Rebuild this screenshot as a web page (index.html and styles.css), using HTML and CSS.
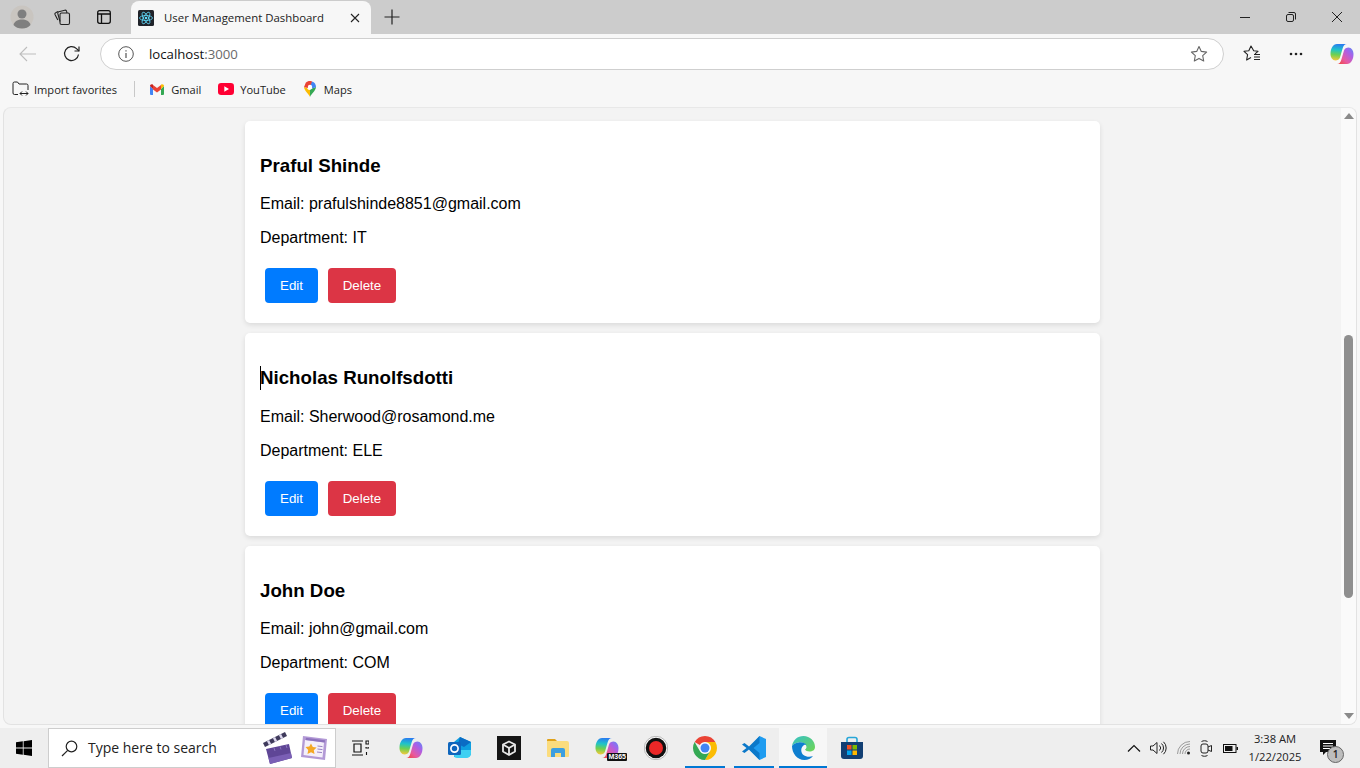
FILE: index.html
```html
<!doctype html>
<html>
    <head>
        <meta charset="utf-8" />
        <meta name="viewport" content="width=device-width, initial-scale=1" />
        <title>User Management Dashboard</title>
        <link rel="stylesheet" href="styles.css">
    </head>
    <body>
        <svg class="defs" width="0" height="0">
            <defs>
                <linearGradient id="cpA" x1="0.4" y1="0" x2="0.3" y2="1">
                    <stop offset="0" stop-color="#2a7cf0" />
                    <stop offset="0.35" stop-color="#1fc4c8" />
                    <stop offset="0.65" stop-color="#6fd050" />
                    <stop offset="1" stop-color="#f7c83c" />
                </linearGradient>
                <linearGradient id="cpB" x1="0" y1="1" x2="1" y2="0">
                    <stop offset="0" stop-color="#f0442f" />
                    <stop offset="0.35" stop-color="#e85aa0" />
                    <stop offset="0.7" stop-color="#a860e8" />
                    <stop offset="1" stop-color="#5a8cf5" />
                </linearGradient>
                <linearGradient id="edgeA" x1="0" y1="0" x2="1" y2="1">
                    <stop offset="0" stop-color="#35c1c9" />
                    <stop offset="1" stop-color="#6fd651" />
                </linearGradient>
                <symbol id="copilot" viewBox="0 0 24 24">
                    <path d="M7 2h10c-2.500 0-3.700 2-4.400 4.500L10 15.500c-.5 2-2.500 3-4.500 3-3 0-5-3-5-6.500C.5 6.500 3 2 7 2z" fill="url(#cpA)" />
                    <path d="M17 22H7c2.500 0 3.700-2 4.400-4.500L14 8.500c.5-2 2.500-3 4.500-3 3 0 5 3 5 6.500 0 5.500-2.500 10-6.500 10z" fill="url(#cpB)" />
                </symbol>
            </defs>
        </svg>

        <div class="tabstrip">
            <span class="strip-btn avatar-btn">
                <svg width="24" height="24" viewBox="0 0 24 24"><circle cx="12" cy="12" r="11.500" fill="#c9c5c0" /><circle cx="12" cy="9" r="4.500" fill="#7f7f7f" /><path d="M3.500 20c1-4 4.500-5.500 8.500-5.500s7.500 1.500 8.500 5.500c-2 2.500-5 3.500-8.500 3.500s-6.500-1-8.500-3.500z" fill="#7f7f7f" /></svg>
            </span>
            <span class="strip-btn workspaces-btn">
                <svg width="18" height="18" viewBox="0 0 18 18" fill="none" stroke="#222" stroke-width="1.100"><rect x="7" y="5" width="9.500" height="11.500" rx="1.500" /><path d="M7 13.500 4.800 5.500c-.2-.8.2-1.500 1-1.700l6-1.600c.8-.2 1.500.2 1.700 1L14 5" /><path d="M4.800 12 2 6.500c-.3-.7 0-1.500.7-1.800L5 3.500" /></svg>
            </span>
            <span class="strip-btn vtabs-btn">
                <svg width="16" height="16" viewBox="0 0 16 16" fill="none" stroke="#111" stroke-width="1.300"><rect x="1.700" y="1.700" width="12.600" height="12.600" rx="2" /><path d="M1.700 5h12.600M5.500 5v9.300" /></svg>
            </span>
            <div class="tab">
                <svg class="favicon" width="16" height="16" viewBox="0 0 16 16"><rect width="16" height="16" rx="1.500" fill="#20232a" /><g fill="none" stroke="#61dafb" stroke-width=".8"><ellipse cx="8" cy="8" rx="6.500" ry="2.500" /><ellipse cx="8" cy="8" rx="6.500" ry="2.500" transform="rotate(60 8 8)" /><ellipse cx="8" cy="8" rx="6.500" ry="2.500" transform="rotate(120 8 8)" /></g><circle cx="8" cy="8" r="1.300" fill="#61dafb" /></svg>
                <span class="tab-title">User Management Dashboard</span>
                <svg class="tab-close" width="10" height="10" viewBox="0 0 10 10" stroke="#222" stroke-width="1.100"><path d="M1 1l8 8M9 1l-8 8" /></svg>
            </div>
            <span class="strip-btn newtab-btn">
                <svg width="16" height="16" viewBox="0 0 16 16" stroke="#222" stroke-width="1.200"><path d="M8 .5v15M.5 8h15" /></svg>
            </span>
            <div class="window-btns">
                <span class="win-btn"><svg width="10" height="10" viewBox="0 0 10 10" stroke="#222"><path d="M0 5.500h10" /></svg></span>
                <span class="win-btn"><svg width="10" height="10" viewBox="0 0 10 10" fill="none" stroke="#222"><rect x=".5" y="2.500" width="7" height="7" rx="1.500" /><path d="M2.500 .5h5.500a1.500 1.500 0 0 1 1.500 1.500v5.500" /></svg></span>
                <span class="win-btn"><svg width="10" height="10" viewBox="0 0 10 10" stroke="#222"><path d="M0 0l10 10M10 0L0 10" /></svg></span>
            </div>
        </div>

        <div class="toolbar">
            <span class="tool-btn back-btn">
                <svg width="18" height="18" viewBox="0 0 18 18" fill="none" stroke="#bdbdbd" stroke-width="1.100"><path d="M1 9h16M8 2 1 9l7 7" /></svg>
            </span>
            <span class="tool-btn reload-btn">
                <svg width="18" height="18" viewBox="0 0 18 18" fill="none" stroke="#222" stroke-width="1.200"><path d="M15.500 9.500A7 7 0 1 1 13.500 3.600L16 6" /><path d="M16 1.500V6h-4.500" /></svg>
            </span>
            <div class="urlbar">
                <svg class="info-icon" width="16" height="16" viewBox="0 0 16 16" fill="none" stroke="#555"><circle cx="8" cy="8" r="7.300" /><path d="M8 7v5M8 4.200v1.300" stroke-width="1.200" /></svg>
                <span class="url"><span class="host">localhost</span>:3000</span>
                <svg class="url-star" width="18" height="18" viewBox="0 0 18 18" fill="none" stroke="#666" stroke-width="1.100"><path d="M9 1.500l2.300 4.900 5.300.7-3.900 3.600 1 5.300L9 13.400 4.300 16l1-5.300-3.900-3.600 5.300-.7z" stroke-linejoin="round" /></svg>
            </div>
            <span class="tool-btn fav-btn">
                <svg width="18" height="18" viewBox="0 0 18 18" fill="none" stroke="#222" stroke-width="1.100"><path d="M12 8.800l3-2.500-4.300-.6L8 1 5.800 5.700 1 6.300l3.600 3.400-1 5.300L8 12.500" stroke-linejoin="round" /><path d="M11 9.500h6M11 12h6M11 14.500h6" /></svg>
            </span>
            <span class="tool-btn more-btn">
                <svg width="14" height="4" viewBox="0 0 14 4" fill="#222"><circle cx="2" cy="2" r="1.300" /><circle cx="7" cy="2" r="1.300" /><circle cx="12" cy="2" r="1.300" /></svg>
            </span>
            <span class="tool-btn copilot-btn">
                <svg width="24" height="24"><use href="#copilot" /></svg>
            </span>
        </div>

        <div class="bookmarks">
            <span class="bookmark import-mark">
                <svg width="17" height="16" viewBox="0 0 17 16" fill="none" stroke="#222"><path d="M6 13.500H2.500a1.500 1.500 0 0 1-1.500-1.500V2.500A1.500 1.500 0 0 1 2.500 1h3l1.500 2h7.500A1.500 1.500 0 0 1 16 4.500V9" /><path d="M8 12.500h8M10 10.500l-2 2 2 2M14 10.500l2 2-2 2" /></svg>
                Import favorites
            </span>
            <span class="bookmark-sep"></span>
            <span class="bookmark gmail-mark">
                <svg width="14" height="11" viewBox="0 0 14 11"><path d="M0 2v8a1 1 0 0 0 1 1h2V5z" fill="#4285f4" /><path d="M14 2v8a1 1 0 0 1-1 1h-2V5z" fill="#34a853" /><path d="M3 5.500V1L7 4l4-3v4.500L7 8.500z" fill="#ea4335" /><path d="M0 2c0-1.500 1.700-2.300 3-1.300V5z" fill="#c5221f" /><path d="M14 2c0-1.500-1.700-2.300-3-1.300V5z" fill="#fbbc04" /></svg>
                Gmail
            </span>
            <span class="bookmark yt-mark">
                <svg width="16" height="12" viewBox="0 0 16 12"><rect width="16" height="12" rx="3.200" fill="#ff0033" /><path d="M6.300 3.300v5.400L11 6z" fill="#fff" /></svg>
                YouTube
            </span>
            <span class="bookmark maps-mark">
                <svg width="12" height="16" viewBox="0 0 12 16"><path d="M6 16C5 13 0 9.500 0 6l3 1c.6 1.700 2 2 3 2z" fill="#fbbc04" /><path d="M6 16c1-3 6-6.500 6-10L9 7 6 9z" fill="#34a853" /><path d="M1.800 1.800 0 6l3.500 1L8 3V.4C5.500-.4 3.300.2 1.800 1.800z" fill="#ea4335" /><path d="M8 .4A6 6 0 0 1 12 6L8.500 7.500 6.500 4.500z" fill="#4285f4" /><circle cx="6" cy="6" r="2.200" fill="#fff" /></svg>
                Maps
            </span>
        </div>

        <div class="viewport">
            <main class="page">
                <section class="user-card">
                    <h3>Praful Shinde</h3>
                    <p>Email: prafulshinde8851@gmail.com</p>
                    <p>Department: IT</p>
                    <div class="card-actions">
                        <button class="btn btn-edit">Edit</button>
                        <button class="btn btn-delete">Delete</button>
                    </div>
                </section>
                <section class="user-card">
                    <h3 class="has-caret">Nicholas Runolfsdotti</h3>
                    <p>Email: Sherwood@rosamond.me</p>
                    <p>Department: ELE</p>
                    <div class="card-actions">
                        <button class="btn btn-edit">Edit</button>
                        <button class="btn btn-delete">Delete</button>
                    </div>
                </section>
                <section class="user-card">
                    <h3>John Doe</h3>
                    <p>Email: john@gmail.com</p>
                    <p>Department: COM</p>
                    <div class="card-actions">
                        <button class="btn btn-edit">Edit</button>
                        <button class="btn btn-delete">Delete</button>
                    </div>
                </section>
            </main>
            <div class="scrollbar">
                <span class="arrow arrow-up"></span>
                <span class="thumb"></span>
                <span class="arrow arrow-down"></span>
            </div>
        </div>

        <div class="taskbar">
            <span class="start-btn">
                <svg width="16" height="16" viewBox="0 0 16 16" fill="#000"><path d="M0 2.300 6.800 1.300v6.300H0zM7.600 1.200 16 0v7.600H7.600zM0 8.400h6.800v6.300L0 13.700zM7.600 8.400H16V16l-8.400-1.200z" /></svg>
            </span>
            <div class="searchbox">
                <svg class="search-icon" width="17" height="17" viewBox="0 0 17 17" fill="none" stroke="#222" stroke-width="1.200"><circle cx="10.500" cy="6.500" r="5.300" /><path d="M6.700 10.300 1 16" /></svg>
                <span class="search-text">Type here to search</span>
                <svg class="clapper" width="32" height="34" viewBox="0 0 32 34"><path d="M4 18l23-5 3 14-22 6z" fill="#5f4696" /><path d="M6.500 27 29 22l1 5-22 6z" fill="#7a5fb5" /><path d="M1 12 23 1l2 4L3 16z" fill="#3f3a5c" /><path d="M6 9.500l2 4M12 6.500l2 4M18 3.500l2 4" stroke="#dcd8ee" stroke-width="2.500" /><path d="M12 17l1 3M18 15.500l1 3M24 14l1 3" stroke="#8a74bd" /></svg>
                <svg class="news" width="28" height="26" viewBox="0 0 28 26"><path d="M3 1l24 3-2 21-24-3z" fill="#b39ad6" /><path d="M5 5l19 2.500-1.500 15L3.500 20z" fill="#f4effa" /><path d="M6 2.700l19 2.500-.2 2.300L5.700 5z" fill="#8e73bd" /><path d="M11 8.500l1.800 3.500 3.800.5-2.800 2.700.7 3.800-3.500-1.800-3.500 1.700.7-3.800L5.500 12l3.800-.5z" fill="#f4a825" /><path d="M17.500 11l5 .6M17.500 14l5 .6M17 17l5 .6" stroke="#9a83c4" /></svg>
            </div>
            <span class="task-cell taskview-cell">
                <svg width="17" height="16" viewBox="0 0 17 16" fill="none" stroke="#111" stroke-width="1.200"><path d="M0 1h11M0 15h11M2 4h7v8H2z" /><path d="M14 1h3v3h-3zM14 7v1h3V7M14.500 12v3" stroke-width="1.100" /></svg>
            </span>
            <div class="task-apps">
                <span class="task-cell"><svg width="24" height="24"><use href="#copilot" /></svg></span>
                <span class="task-cell">
                    <svg width="24" height="24" viewBox="0 0 24 24"><path d="M12 1l11 5v11c0 2-1 4-4 4H10l-4 0 0-15z" fill="#0f9fe0" /><path d="M6 14h17v3c0 3-2 5-5 5H9c-2 0-3-1-3-3z" fill="#3ed0f2" /><path d="M12 1l11 5-7 5-6-3z" fill="#0a6cc4" /><rect x="0" y="6" width="13" height="13" rx="1.500" fill="#0f66bd" /><circle cx="6.500" cy="12.500" r="3.600" fill="none" stroke="#fff" stroke-width="1.700" /></svg>
                </span>
                <span class="task-cell">
                    <svg width="24" height="24" viewBox="0 0 24 24"><rect width="24" height="24" fill="#151515" /><g fill="none" stroke="#e8e8e8" stroke-width="1.800" stroke-linejoin="round"><path d="M12 5.500l6 3v7l-6 3.500-6-3.500v-7z" /><path d="M6 8.500l6 3.500 6-3.500M12 12v7" /></g></svg>
                </span>
                <span class="task-cell">
                    <svg width="22" height="20" viewBox="0 0 22 20"><path d="M0 2a1 1 0 0 1 1-1h7l2 2h-10z" fill="#e0a21a" /><path d="M0 3h20a2 2 0 0 1 2 2v13a1 1 0 0 1-1 1H1a1 1 0 0 1-1-1z" fill="#fbdc7d" /><path d="M4 12a2 2 0 0 1 2-2h10a2 2 0 0 1 2 2v7h-4v-4H8v4H4z" fill="#3d9fe0" /></svg>
                </span>
                <span class="task-cell m365-cell">
                    <svg width="24" height="24"><use href="#copilot" /></svg>
                    <span class="m365-tag">M365</span>
                </span>
                <span class="task-cell">
                    <svg width="24" height="24" viewBox="0 0 24 24"><circle cx="12" cy="12" r="11.700" fill="#fff" stroke="#888" stroke-width=".6" /><circle cx="12" cy="12" r="10.300" fill="#111" /><circle cx="12" cy="12" r="7" fill="#ec2727" /></svg>
                </span>
                <span class="task-cell running">
                    <svg width="24" height="24" viewBox="0 0 24 24"><path d="M12 0a12 12 0 0 1 10.390 6H12a6 6 0 0 0-5.200 3L1.610 6A12 12 0 0 1 12 0z" fill="#ea4335" /><path d="M22.390 6A12 12 0 0 1 12 24l5.200-9a6 6 0 0 0 0-6 6 6 0 0 0-5.200-3z" fill="#fbbc04" /><path d="M1.610 6l5.190 9a6 6 0 0 0 5.200 3 6 6 0 0 0 5.200-3L12 24A12 12 0 0 1 1.610 6z" fill="#34a853" /><circle cx="12" cy="12" r="5.500" fill="#fff" /><circle cx="12" cy="12" r="4.500" fill="#4285f4" /></svg>
                </span>
                <span class="task-cell running">
                    <svg width="24" height="24" viewBox="0 0 24 24"><path d="M17.500 0 24 3v18l-6.500 3L7 13.500z" fill="#1f9cf0" /><path d="M17.500 0 7 10.500 2.500 7 0 8.500 4.500 12 0 15.500 2.500 17 7 13.500 17.500 24V17L11.500 12l6-5z" fill="#0b78c9" /></svg>
                </span>
                <span class="task-cell running active">
                    <svg width="24" height="24" viewBox="0 0 24 24"><path d="M1 10C2 4 6.500 0 12.500 0 19 0 24 5 24 11c0 3-2.500 4.500-5.500 4.500-2 0-4-.7-4.500-2 1.500-1 2-2.500.8-4.500C13.500 7 10.500 6 7.500 6.500 4.500 7 2 8 1 10z" fill="url(#edgeA)" /><path d="M1 10c0 7 5 14 12.500 14 3.500 0 6.500-1.300 8.500-4-3 1.300-7 1-9.500-1-2.500-2-3-6-1-8.500 1-1.500 2.500-2 4-1.500C14 7 11 6 7.500 6.500 4.500 7 2 8 1 10z" fill="#0f7fd0" /></svg>
                </span>
                <span class="task-cell">
                    <svg width="24" height="24" viewBox="0 0 24 24"><path d="M7 6V3.500A2 2 0 0 1 9 1.500h6a2 2 0 0 1 2 2V6" fill="none" stroke="#27a6d8" stroke-width="1.600" /><path d="M1 6h22v14a3 3 0 0 1-3 3H4a3 3 0 0 1-3-3z" fill="#123f73" /><rect x="7" y="9" width="4.500" height="4.500" fill="#f25022" /><rect x="12.500" y="9" width="4.500" height="4.500" fill="#7fba00" /><rect x="7" y="14.500" width="4.500" height="4.500" fill="#00a4ef" /><rect x="12.500" y="14.500" width="4.500" height="4.500" fill="#ffb900" /></svg>
                </span>
            </div>
            <div class="tray">
                <svg class="tray-chevron" width="14" height="8" viewBox="0 0 14 8" fill="none" stroke="#111" stroke-width="1.200"><path d="M1 7.500 7 1.500l6 6" /></svg>
                <svg class="tray-volume" width="17" height="14" viewBox="0 0 17 14" fill="none" stroke="#222"><path d="M.5 5v4h2.500L7 12.500v-11L3 5z" /><path d="M9.500 4.500a3.500 3.500 0 0 1 0 5M11.500 2.500a6 6 0 0 1 0 9M13.500 .8a8.500 8.500 0 0 1 0 12.400" /></svg>
                <svg class="tray-wifi" width="14" height="14" viewBox="0 0 14 14" fill="none" stroke="#9a9a9a"><path d="M.5 13A12.500 12.500 0 0 1 13 .5M3 13A10 10 0 0 1 13 3M5.500 13A7.500 7.500 0 0 1 13 5.500M8 13a5 5 0 0 1 5-5" /><circle cx="11.500" cy="12" r="1.500" fill="#222" stroke="none" /></svg>
                <svg class="tray-mic" width="12" height="17" viewBox="0 0 12 17" fill="none" stroke="#222"><rect x="1" y="4" width="7" height="9" rx="2" /><path d="M8 7l3.500-1.500v6L8 10M1.500 1.500c2-1 4-1 6 0M1.500 15.500c2 1 4 1 6 0" /></svg>
                <svg class="tray-battery" width="15" height="9" viewBox="0 0 15 9"><rect x=".5" y=".5" width="12.500" height="8" fill="none" stroke="#111" /><rect x="2" y="2" width="7.500" height="5" fill="#111" /><rect x="13.500" y="3" width="1.500" height="3" fill="#111" /></svg>
                <div class="clock">
                    <span>3:38 AM</span>
                    <span>1/22/2025</span>
                </div>
                <span class="notify">
                    <svg width="16" height="16" viewBox="0 0 16 16"><path d="M0 0h16v12H6l-3 3v-3H0z" fill="#111" /><path d="M3 3.500h10M3 6h10M3 8.500h7" stroke="#fff" /></svg>
                    <span class="notify-badge">1</span>
                </span>
            </div>
        </div>
    </body>
</html>
```

FILE: styles.css
```css
html,
body {
    height: 100%;
}

body {
    margin: 0;
    height: 768px;
    overflow: hidden;
    display: flex;
    flex-direction: column;
    background: #f7f7f7;
    font-family: "Open Sans", sans-serif;
    color: #222;
}

.defs {
    position: absolute;
}

svg {
    display: block;
    flex: none;
}

/* browser chrome */
.tabstrip {
    height: 34px;
    flex: none;
    display: flex;
    align-items: center;
    background: #cccccc;
}

.strip-btn {
    display: flex;
    align-items: center;
    justify-content: center;
}

.avatar-btn {
    width: 24px;
    margin-left: 10px;
}

.workspaces-btn {
    width: 18px;
    margin-left: 19px;
}

.vtabs-btn {
    width: 16px;
    margin-left: 25px;
}

.tab {
    width: 240px;
    height: 33px;
    margin-top: 1px;
    margin-left: 19px;
    padding-left: 7px;
    display: flex;
    align-items: center;
    background: #f7f7f7;
    border-radius: 8px 8px 0 0;
    box-sizing: border-box;
}

.tab-title {
    margin-left: 10px;
    width: 186px;
    font-size: 11.400px;
    white-space: nowrap;
}

.newtab-btn {
    width: 16px;
    margin-left: 13px;
}

.window-btns {
    display: flex;
    margin-left: auto;
}

.win-btn {
    width: 46px;
    height: 34px;
    display: flex;
    align-items: center;
    justify-content: center;
}

.toolbar {
    height: 40px;
    flex: none;
    display: flex;
    align-items: center;
    background: #f7f7f7;
}

.tool-btn {
    display: flex;
    align-items: center;
    justify-content: center;
}

.back-btn {
    width: 18px;
    margin-left: 19px;
}

.reload-btn {
    width: 18px;
    margin-left: 26px;
}

.urlbar {
    width: 1124px;
    height: 32px;
    margin-left: 19px;
    padding: 0 15px 0 17px;
    display: flex;
    align-items: center;
    background: #fff;
    border: 1px solid #cfcfcf;
    border-radius: 16px;
    box-sizing: border-box;
}

.url {
    margin-left: 15px;
    font-size: 13.200px;
    color: #6a6a6a;
}

.host {
    color: #111;
}

.url-star {
    margin-left: auto;
}

.fav-btn {
    width: 18px;
    margin-left: 19px;
}

.more-btn {
    width: 14px;
    margin-left: 28px;
}

.copilot-btn {
    width: 24px;
    margin-left: 27px;
}

.bookmarks {
    height: 32px;
    flex: none;
    display: flex;
    align-items: center;
    padding-left: 12px;
    padding-bottom: 2px;
    box-sizing: border-box;
    font-size: 11.100px;
    background: #f7f7f7;
}

.bookmark {
    display: flex;
    align-items: center;
    gap: 6px;
    white-space: nowrap;
}

.import-mark {
    gap: 5px;
}

.bookmark-sep {
    width: 1px;
    height: 16px;
    margin: 0 15px 0 17px;
    background: #c8c8c8;
}

.gmail-mark {
    gap: 7px;
}

.yt-mark {
    margin-left: 17px;
}

.maps-mark {
    margin-left: 18px;
    gap: 8px;
}

/* page area */
.viewport {
    flex: none;
    height: 618px;
    margin: 1px 3px 0 3px;
    display: flex;
    overflow: hidden;
    background: #f3f3f3;
    border: 1px solid #e2e2e2;
    border-top-color: #e8e8e8;
    border-radius: 8px;
    box-sizing: border-box;
    font-family: "Liberation Sans", Arial, sans-serif;
    color: #000;
}

.page {
    flex: 1;
    min-width: 0;
    padding-top: 13px;
}

.user-card {
    width: 855px;
    height: 202.400px;
    margin: 0 auto 10px;
    padding: 15px;
    box-sizing: border-box;
    background: #fff;
    border-radius: 5px;
    box-shadow: 0 2px 5px rgba(0, 0, 0, 0.1);
}

.user-card h3 {
    margin: 18.720px 0;
    font-size: 18.720px;
    position: relative;
}

.user-card p {
    margin: 16px 0;
    font-size: 16px;
}

.has-caret::before {
    content: "";
    position: absolute;
    left: 0;
    top: -1px;
    bottom: -1px;
    width: 1px;
    background: #000;
}

.card-actions {
    display: flex;
}

.btn {
    margin: 5px;
    padding: 10px 15px;
    border: none;
    border-radius: 4px;
    color: #fff;
    font-family: "Liberation Sans", Arial, sans-serif;
    font-size: 13.333px;
}

.btn-edit {
    background: #007bff;
}

.btn-delete {
    width: 68px;
    padding: 10px 0;
    background: #dc3545;
}

.scrollbar {
    width: 15px;
    flex: none;
    display: flex;
    flex-direction: column;
    align-items: center;
    background: #fafafa;
}

.arrow {
    width: 0;
    height: 0;
    border-left: 5px solid transparent;
    border-right: 5px solid transparent;
}

.arrow-up {
    margin-top: 5px;
    border-bottom: 6px solid #8a8a8a;
}

.thumb {
    width: 9px;
    height: 263px;
    margin-top: 216px;
    background: #8f8f8f;
    border-radius: 5px;
}

.arrow-down {
    margin-top: auto;
    margin-bottom: 5px;
    border-top: 6px solid #8a8a8a;
}

/* windows taskbar */
.taskbar {
    height: 40px;
    margin-top: 3px;
    flex: none;
    display: flex;
    background: #eeeeee;
}

.start-btn {
    width: 48px;
    display: flex;
    align-items: center;
    justify-content: center;
}

.searchbox {
    width: 288px;
    display: flex;
    align-items: center;
    padding-left: 12px;
    background: #fff;
    border: 1px solid #cdcdcd;
    box-sizing: border-box;
}

.search-text {
    margin-left: 10px;
    margin-bottom: 1px;
    width: 174px;
    font-size: 14px;
    white-space: nowrap;
}

.news {
    margin-left: 6px;
}

.task-cell {
    position: relative;
    width: 48px;
    height: 40px;
    display: flex;
    align-items: center;
    justify-content: center;
    flex: none;
}

.task-apps {
    display: flex;
    gap: 1px;
    margin-left: 3px;
}

.running::after {
    content: "";
    position: absolute;
    left: 4px;
    right: 4px;
    bottom: 0;
    height: 2px;
    background: #0078d4;
}

.active {
    background: #f7f7f7;
}

.active::after {
    left: 0;
    right: 0;
}

.m365-tag {
    position: absolute;
    right: 4px;
    bottom: 7px;
    padding: 0 1px;
    background: #111;
    color: #fff;
    font-family: "Liberation Sans", sans-serif;
    font-size: 7px;
    font-weight: bold;
    line-height: 8px;
    border-radius: 1px;
}

.tray {
    margin-left: auto;
    display: flex;
    align-items: center;
    padding-right: 24px;
}

.tray-volume {
    margin-left: 8.500px;
}

.tray-wifi {
    margin-left: 10.500px;
}

.tray-mic {
    margin-left: 9px;
}

.tray-battery {
    margin-left: 11px;
}

.clock {
    width: 74px;
    display: flex;
    flex-direction: column;
    align-items: center;
    font-size: 11.200px;
    line-height: 18px;
}

.notify {
    position: relative;
    margin-left: 8px;
}

.notify-badge {
    position: absolute;
    left: 7px;
    top: 6px;
    width: 15px;
    height: 15px;
    background: #bdbdbd;
    border: 1px solid #666;
    border-radius: 50%;
    font-size: 10px;
    font-weight: 600;
    line-height: 15px;
    text-align: center;
    color: #222;
}
```
